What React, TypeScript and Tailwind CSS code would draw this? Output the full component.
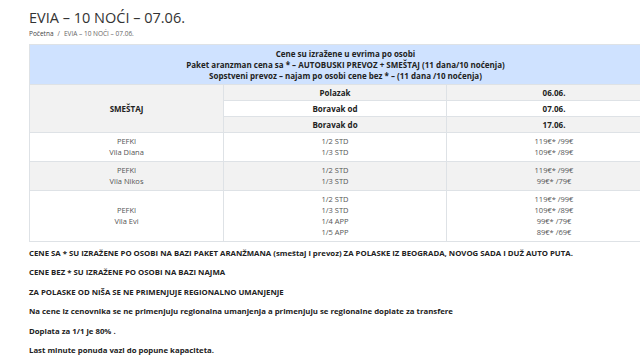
const font = { fontFamily: '"Open Sans", "Liberation Sans", sans-serif' };

type Row = { name: string[]; rooms: string[]; prices: string[] };

const rows: Row[] = [
  { name: ["PEFKI", "Vila Diana"], rooms: ["1/2 STD", "1/3 STD"], prices: ["119€* /99€", "109€* /89€"] },
  { name: ["PEFKI", "Vila Nikos"], rooms: ["1/2 STD", "1/3 STD"], prices: ["119€* /99€", "99€* /79€"] },
  {
    name: ["PEFKI", "Vila Evi"],
    rooms: ["1/2 STD", "1/3 STD", "1/4 APP", "1/5 APP"],
    prices: ["119€* /99€", "109€* /89€", "99€* /79€", "89€* /69€"],
  },
];

const notes = [
  "CENE SA * SU IZRAŽENE PO OSOBI NA BAZI PAKET ARANŽMANA (smeštaj i prevoz) ZA POLASKE IZ BEOGRADA, NOVOG SADA I DUŽ AUTO PUTA.",
  "CENE BEZ * SU IZRAŽENE PO OSOBI NA BAZI NAJMA",
  "ZA POLASKE OD NIŠA SE NE PRIMENJUJE REGIONALNO UMANJENJE",
  "Na cene iz cenovnika se ne primenjuju regionalna umanjenja a primenjuju se regionalne doplate za transfere",
  "Doplata za 1/1 je 80% .",
  "Last minute ponuda vazi do popune kapaciteta.",
];

function Lines({ items }: { items: string[] }) {
  return (
    <>
      {items.map((t) => (
        <div key={t}>{t}</div>
      ))}
    </>
  );
}

export default function App() {
  return (
    <div className="w-[640px] h-[360px] overflow-hidden bg-white" style={font}>
      <div className="pl-[29px]">
        <h1 className="pt-[9px] text-[14.5px] leading-[18px] font-medium text-[#333]">
          EVIA – 10 NOĆI – 07.06.
        </h1>
        <div className="mt-[2px] text-[6.5px] leading-[9px] text-[#666]">
          <span className="text-[#444]">Početna</span>
          <span className="mx-[4px]">/</span>
          <span>EVIA – 10 NOĆI – 07.06.</span>
        </div>

        <table className="mt-[6px] w-[632px] table-fixed border-collapse text-[7.5px] leading-[11px] text-center">
          <colgroup>
            <col className="w-[194px]" />
            <col className="w-[223px]" />
            <col className="w-[215px]" />
          </colgroup>
          <tbody>
            <tr className="bg-[#cfe2ff]">
              <td colSpan={3} className="border border-[#dee2e6] py-[3px] text-[8px] font-bold text-[#222]">
                <div>Cene su izražene u evrima po osobi</div>
                <div>Paket aranzman cena sa * – AUTOBUSKI PREVOZ + SMEŠTAJ (11 dana/10 noćenja)</div>
                <div>Sopstveni prevoz – najam po osobi cene bez * – (11 dana /10 noćenja)</div>
              </td>
            </tr>
            <tr className="bg-[#f2f2f2] text-[8px] font-bold text-[#222]">
              <td rowSpan={3} className="border border-[#dee2e6] bg-[#f2f2f2]">SMEŠTAJ</td>
              <td className="border border-[#dee2e6] h-[16px]">Polazak</td>
              <td className="border border-[#dee2e6]">06.06.</td>
            </tr>
            <tr className="bg-white text-[8px] font-bold text-[#222]">
              <td className="border border-[#dee2e6] h-[16px]">Boravak od</td>
              <td className="border border-[#dee2e6]">07.06.</td>
            </tr>
            <tr className="bg-[#f2f2f2] text-[8px] font-bold text-[#222]">
              <td className="border border-[#dee2e6] h-[16px]">Boravak do</td>
              <td className="border border-[#dee2e6]">17.06.</td>
            </tr>
            {rows.map((r, i) => (
              <tr key={r.name[1]} className={i % 2 === 1 ? "bg-[#f2f2f2] text-[#555]" : "bg-white text-[#555]"}>
                <td className="border border-[#dee2e6] py-[3px]">
                  <Lines items={r.name} />
                </td>
                <td className="border border-[#dee2e6] py-[3px]">
                  <Lines items={r.rooms} />
                </td>
                <td className="border border-[#dee2e6] py-[3px]">
                  <Lines items={r.prices} />
                </td>
              </tr>
            ))}
          </tbody>
        </table>

        <div className="flex flex-col gap-[8.5px] pt-[5.5px] text-[7.8px] leading-[11px] font-bold text-[#222]">
          {notes.map((n) => (
            <p key={n}>{n}</p>
          ))}
        </div>
      </div>
    </div>
  );
}
